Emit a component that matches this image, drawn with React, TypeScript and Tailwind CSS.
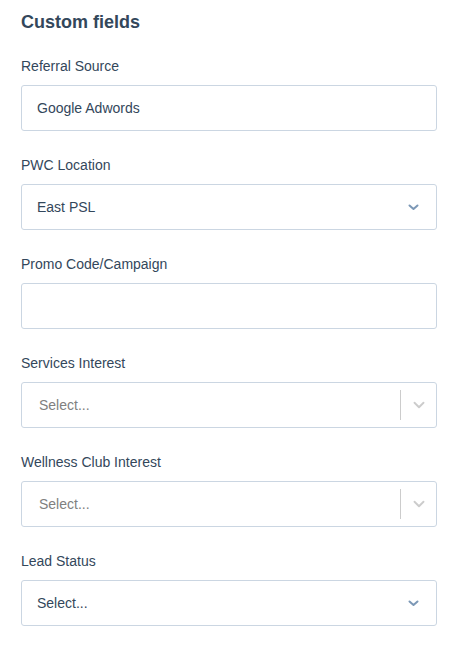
import { ChevronDown } from "lucide-react";

const font = { fontFamily: '"Liberation Sans", Arial, sans-serif' };

const Label = ({ children }: { children: string }) => (
  <label className="block text-[14px] leading-[20px] text-[#33475b] mb-[9px]">
    {children}
  </label>
);

const TextBox = ({ value }: { value?: string }) => (
  <div className="h-[46px] rounded-[3px] border border-[#cbd6e2] bg-white flex items-center px-[15px] text-[14px] text-[#33475b]">
    {value}
  </div>
);

const NativeSelect = ({ value }: { value: string }) => (
  <div className="h-[46px] rounded-[3px] border border-[#cbd6e2] bg-white flex items-center justify-between pl-[15px] pr-[17px] text-[14px] text-[#33475b]">
    <span>{value}</span>
    <svg width="11" height="7" viewBox="0 0 11 7" fill="none">
      <path d="M1.5 1.5 L5.5 5 L9.5 1.5" stroke="#7c98b6" strokeWidth="2" strokeLinecap="round" strokeLinejoin="round" />
    </svg>
  </div>
);

const ReactSelect = () => (
  <div className="h-[46px] rounded-[3px] border border-[#cbd6e2] bg-white flex items-center text-[14px]">
    <span className="flex-1 pl-[17px] text-[#808080]">Select...</span>
    <span className="w-px h-[30px] bg-[#cccccc]" />
    <span className="w-[35px] flex items-center justify-center">
      <ChevronDown className="w-[18px] h-[18px] text-[#cccccc]" strokeWidth={2.5} />
    </span>
  </div>
);

export default function App() {
  return (
    <div className="bg-white w-[465px] h-[656px] px-[21px] pt-[10px]" style={font}>
      <h2 className="text-[18px] leading-[24px] font-bold text-[#33475b] mb-[22px]">Custom fields</h2>
      <div className="w-[416px] flex flex-col gap-[24px]">
        <div>
          <Label>Referral Source</Label>
          <TextBox value="Google Adwords" />
        </div>
        <div>
          <Label>PWC Location</Label>
          <NativeSelect value="East PSL" />
        </div>
        <div>
          <Label>Promo Code/Campaign</Label>
          <TextBox />
        </div>
        <div>
          <Label>Services Interest</Label>
          <ReactSelect />
        </div>
        <div>
          <Label>Wellness Club Interest</Label>
          <ReactSelect />
        </div>
        <div>
          <Label>Lead Status</Label>
          <NativeSelect value="Select..." />
        </div>
      </div>
    </div>
  );
}
